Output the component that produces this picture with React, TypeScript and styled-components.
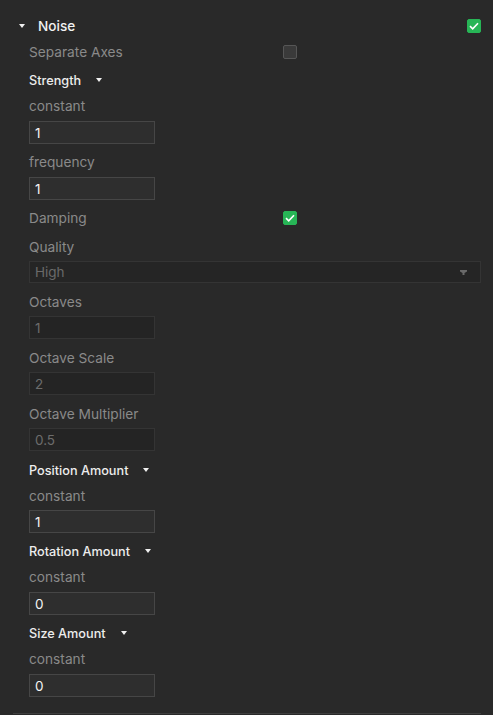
import React from "react";
import styled, { createGlobalStyle } from "styled-components";

const GlobalStyle = createGlobalStyle`
  html, body {
    margin: 0;
    padding: 0;
    background: #292929;
  }
  body {
    font-family: Inter, "Noto Sans", "Liberation Sans", sans-serif;
    -webkit-font-smoothing: antialiased;
  }
`;

const Panel = styled.div`
  width: 493px;
  height: 715px;
  box-sizing: border-box;
  padding: 13px 12px 0 13px;
  background: #292929;
  display: flex;
  flex-direction: column;
`;

const Header = styled.div`
  height: 26px;
  display: flex;
  align-items: center;
  padding-left: 6px;
`;

const HeaderTitle = styled.span`
  flex: 1;
  margin-left: 13px;
  font-size: 13.6px;
  font-weight: 500;
  color: #f2f2f2;
`;

const Body = styled.div`
  display: flex;
  flex-direction: column;
  padding-left: 16px;
`;

const Row = styled.div<{ $after?: number }>`
  height: 26px;
  display: flex;
  align-items: center;
  margin-bottom: ${(p) => p.$after ?? 0}px;
`;

const Label = styled.span<{ $strong?: boolean }>`
  font-size: ${(p) => (p.$strong ? "12.7px" : "13.7px")};
  font-weight: ${(p) => (p.$strong ? 500 : 400)};
  color: ${(p) => (p.$strong ? "#ededed" : "#8a8a8a")};
`;

const LabelCell = styled.div`
  width: 254px;
  display: flex;
  align-items: center;
`;

const Caret = styled.span<{ $gap?: number }>`
  display: inline-block;
  width: 0;
  height: 0;
  margin-left: ${(p) => p.$gap ?? 0}px;
  border-left: 3px solid transparent;
  border-right: 3px solid transparent;
  border-top: 4px solid #f0f0f0;
`;

const Box = styled.div<{ $checked?: boolean }>`
  width: 14px;
  height: 14px;
  box-sizing: border-box;
  border-radius: 2px;
  display: flex;
  align-items: center;
  justify-content: center;
  background: ${(p) => (p.$checked ? "#27b556" : "#3a3a3a")};
  border: 1px solid ${(p) => (p.$checked ? "#27b556" : "#565656")};
`;

const NumberField = styled.div<{ $disabled?: boolean; $before?: number; $after?: number }>`
  width: 126px;
  height: 23px;
  box-sizing: border-box;
  margin-top: ${(p) => p.$before ?? 2}px;
  margin-bottom: ${(p) => p.$after ?? 5}px;
  padding-left: 5px;
  display: flex;
  align-items: center;
  font-size: 13.5px;
  background: ${(p) => (p.$disabled ? "#242424" : "#2e2e2e")};
  border: 1px solid ${(p) => (p.$disabled ? "#343434" : "#464646")};
  color: ${(p) => (p.$disabled ? "#6c6c6c" : "#f4f4f4")};
`;

const Select = styled.div`
  height: 22px;
  box-sizing: border-box;
  margin-top: 1px;
  margin-bottom: 6px;
  padding: 0 13px 0 5px;
  display: flex;
  align-items: center;
  justify-content: space-between;
  font-size: 13.5px;
  background: #252525;
  border: 1px solid #343434;
  color: #6a6a6a;
`;

const Divider = styled.div`
  height: 1px;
  margin-top: 11px;
  background: #3e3e3e;
`;

const Check = () => (
  <svg width="10" height="8" viewBox="0 0 10 8">
    <path d="M1 4.2 L3.7 6.8 L9 1.2" fill="none" stroke="#fff" strokeWidth="1.6" />
  </svg>
);

const CheckBox = ({ checked }: { checked?: boolean }) => (
  <Box $checked={checked}>{checked && <Check />}</Box>
);

const SelectArrow = () => (
  <svg width="7" height="5" viewBox="0 0 7 5">
    <path d="M0 0 H7 V1.5 L4.5 3 V5 H2.5 V3 L0 1.5 Z" fill="#6a6a6a" />
  </svg>
);

const CurveHeader = ({ title, after }: { title: string; after?: number }) => (
  <Row $after={after}>
    <Label $strong>{title}</Label>
    <Caret $gap={15} />
  </Row>
);

const ToggleRow = ({ title, checked, after }: { title: string; checked?: boolean; after?: number }) => (
  <Row $after={after}>
    <LabelCell>
      <Label>{title}</Label>
    </LabelCell>
    <CheckBox checked={checked} />
  </Row>
);

const Caption = ({ text }: { text: string }) => (
  <Row>
    <Label>{text}</Label>
  </Row>
);

export default function App() {
  return (
    <>
      <GlobalStyle />
      <Panel>
        <Header>
          <Caret />
          <HeaderTitle>Noise</HeaderTitle>
          <CheckBox checked />
        </Header>
        <Body>
          <ToggleRow title="Separate Axes" after={2} />
          <CurveHeader title="Strength" />
          <Caption text="constant" />
          <NumberField>1</NumberField>
          <Caption text="frequency" />
          <NumberField>1</NumberField>
          <ToggleRow title="Damping" checked after={3} />
          <Caption text="Quality" />
          <Select>
            <span>High</span>
            <SelectArrow />
          </Select>
          <Caption text="Octaves" />
          <NumberField $disabled $before={1} $after={6}>1</NumberField>
          <Caption text="Octave Scale" />
          <NumberField $disabled $before={1} $after={6}>2</NumberField>
          <Caption text="Octave Multiplier" />
          <NumberField $disabled $before={1} $after={6}>0.5</NumberField>
          <CurveHeader title="Position Amount" />
          <Caption text="constant" />
          <NumberField $before={1}>1</NumberField>
          <CurveHeader title="Rotation Amount" />
          <Caption text="constant" />
          <NumberField>0</NumberField>
          <CurveHeader title="Size Amount" />
          <Caption text="constant" />
          <NumberField>0</NumberField>
        </Body>
        <Divider />
      </Panel>
    </>
  );
}
